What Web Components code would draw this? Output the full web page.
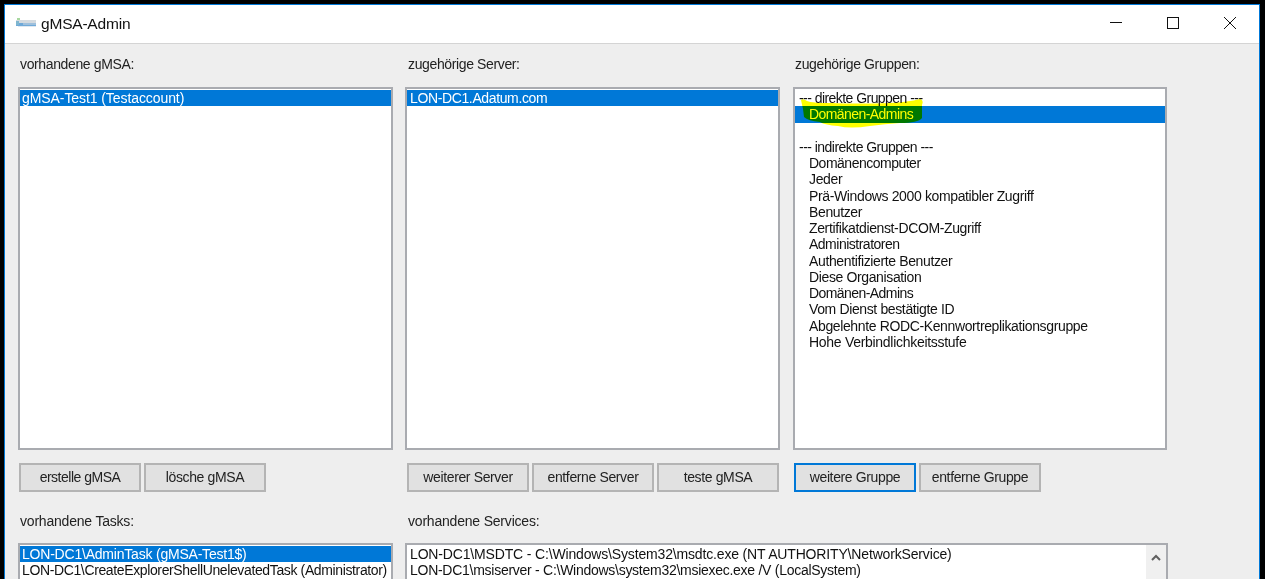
<!DOCTYPE html>
<html>
<head>
<meta charset="utf-8">
<title>gMSA-Admin</title>
<style>
    html, body { margin: 0; height: 100%; overflow: hidden; background: #000; }
    body { font-family: "Liberation Sans", Arial, sans-serif; }
</style>
</head>
<body>
<gmsa-window>
    <title-bar slot="title">gMSA-Admin</title-bar>

    <list-column label="vorhandene gMSA:">
        <list-box>
            <list-row selected style="letter-spacing: -0.08px;">gMSA-Test1 (Testaccount)</list-row>
        </list-box>
        <win-button slot="buttons" style="letter-spacing: -0.5px;">erstelle gMSA</win-button>
        <win-button slot="buttons">lösche gMSA</win-button>
    </list-column>

    <list-column label="zugehörige Server:" style="--row-pad: 3px; --label-pad: 3px; --button-pad: 2px;">
        <list-box>
            <list-row selected>LON-DC1.Adatum.com</list-row>
        </list-box>
        <win-button slot="buttons">weiterer Server</win-button>
        <win-button slot="buttons">entferne Server</win-button>
        <win-button slot="buttons">teste gMSA</win-button>
    </list-column>

    <list-column label="zugehörige Gruppen:" style="--row-pad: 4px; --label-pad: 2px; margin-left: 1px;">
        <list-box>
            <list-row style="letter-spacing: -0.55px;">--- direkte Gruppen ---</list-row>
            <list-row selected indent style="letter-spacing: -0.57px;">Domänen-Admins</list-row>
            <list-row></list-row>
            <list-row style="letter-spacing: -0.53px;">--- indirekte Gruppen ---</list-row>
            <list-row indent style="letter-spacing: -0.5px;">Domänencomputer</list-row>
            <list-row indent>Jeder</list-row>
            <list-row indent>Prä-Windows 2000 kompatibler Zugriff</list-row>
            <list-row indent>Benutzer</list-row>
            <list-row indent>Zertifikatdienst-DCOM-Zugriff</list-row>
            <list-row indent style="letter-spacing: -0.5px;">Administratoren</list-row>
            <list-row indent>Authentifizierte Benutzer</list-row>
            <list-row indent>Diese Organisation</list-row>
            <list-row indent style="letter-spacing: -0.57px;">Domänen-Admins</list-row>
            <list-row indent>Vom Dienst bestätigte ID</list-row>
            <list-row indent>Abgelehnte RODC-Kennwortreplikationsgruppe</list-row>
            <list-row indent style="letter-spacing: -0.29px;">Hohe Verbindlichkeitsstufe</list-row>
            <marker-blob></marker-blob>
        </list-box>
        <win-button slot="buttons" focused>weitere Gruppe</win-button>
        <win-button slot="buttons">entferne Gruppe</win-button>
    </list-column>

    <list-column slot="lower" label="vorhandene Tasks:" short>
        <list-box>
            <list-row selected style="letter-spacing: -0.21px;">LON-DC1\AdminTask (gMSA-Test1$)</list-row>
            <list-row>LON-DC1\CreateExplorerShellUnelevatedTask (Administrator)</list-row>
        </list-box>
    </list-column>

    <list-column slot="lower" label="vorhandene Services:" short style="--row-pad: 3px; --label-pad: 3px;">
        <list-box scrollbar>
            <list-row style="letter-spacing: -0.16px;">LON-DC1\MSDTC - C:\Windows\System32\msdtc.exe (NT AUTHORITY\NetworkService)</list-row>
            <list-row style="letter-spacing: -0.27px;">LON-DC1\msiserver - C:\Windows\system32\msiexec.exe /V (LocalSystem)</list-row>
        </list-box>
    </list-column>
</gmsa-window>

<script>
class GmsaWindow extends HTMLElement {
    constructor() {
        super();
        this.attachShadow({ mode: 'open' });
        this.shadowRoot.innerHTML = `
            <style>
                :host {
                    display: flex;
                    flex-direction: column;
                    box-sizing: border-box;
                    width: 1256px;
                    height: 575px;
                    margin: 4px 0 0 4px;
                    border: 1px solid #0078d7;
                    border-bottom: 0;
                    background: #eeeeee;
                    overflow: hidden;
                }
                .panel {
                    display: flex;
                    flex-direction: column;
                    padding: 0 0 0 13px;
                }
                .top, .lower {
                    display: grid;
                    grid-template-columns: 375px 375px 375px;
                    column-gap: 12px;
                }
                .lower {
                    grid-template-columns: 375px 763px;
                    margin-top: 8px;
                }
            </style>
            <slot name="title"></slot>
            <div class="panel">
                <div class="top"><slot></slot></div>
                <div class="lower"><slot name="lower"></slot></div>
            </div>
        `;
    }
}

class TitleBar extends HTMLElement {
    constructor() {
        super();
        this.attachShadow({ mode: 'open' });
        this.shadowRoot.innerHTML = `
            <style>
                :host {
                    display: flex;
                    align-items: center;
                    height: 39px;
                    box-sizing: border-box;
                    background: #fff;
                    border-bottom: 1px solid #d4d4d4;
                    padding-left: 10px;
                    font-size: 15.5px;
                    letter-spacing: -0.2px;
                    color: #111;
                }
                .icon { width: 22px; height: 12px; margin-right: 4px; flex: none; }
                .text { flex: 1; }
                .controls { display: flex; margin: 0 1px 2px 0; }
                .controls span {
                    display: flex;
                    align-items: center;
                    justify-content: center;
                    width: 57px;
                    height: 36px;
                }
                svg { display: block; }
            </style>
            <svg class="icon" viewBox="0 0 22 12">
                <rect x="2" y="0" width="3" height="2" fill="#a8d8a0"/>
                <rect x="1" y="2" width="20" height="3" fill="#d4dadf"/>
                <rect x="1" y="5" width="20" height="3" fill="#6fa9d8"/>
                <path d="M1 3 H4 V7 H1 Z" fill="#7fb6cf"/>
                <rect x="8" y="5.5" width="13" height="1" fill="#cfd8e0"/>
                <rect x="3" y="8" width="18" height="1" fill="#dfe8f0"/>
            </svg>
            <div class="text"><slot></slot></div>
            <div class="controls">
                <span><svg width="12" height="12" viewBox="0 0 12 12"><path d="M0 5.5 H12" stroke="#111" fill="none"/></svg></span>
                <span><svg width="12" height="12" viewBox="0 0 12 12"><rect x=".5" y=".5" width="11" height="11" stroke="#111" fill="none"/></svg></span>
                <span><svg width="12" height="12" viewBox="0 0 12 12"><path d="M0 0 L12 12 M12 0 L0 12" stroke="#111" fill="none"/></svg></span>
            </div>
        `;
    }
}

class ListColumn extends HTMLElement {
    constructor() {
        super();
        this.attachShadow({ mode: 'open' });
        this.shadowRoot.innerHTML = `
            <style>
                :host {
                    display: flex;
                    flex-direction: column;
                    font-size: 14px;
                    letter-spacing: -0.37px;
                    color: #222;
                }
                .label {
                    height: 43px;
                    padding: 12px 0 0 var(--label-pad, 2px);
                    box-sizing: border-box;
                    line-height: 16px;
                }
                :host([short]) .label { padding-top: 13px; letter-spacing: -0.2px; }
                .list { display: flex; height: 363px; }
                :host([short]) .list { height: 60px; }
                .buttons {
                    display: flex;
                    gap: 3px;
                    padding: 13px 0 0 var(--button-pad, 1px);
                    height: 29px;
                }
                :host([short]) .buttons { display: none; }
            </style>
            <div class="label"></div>
            <div class="list"><slot></slot></div>
            <div class="buttons"><slot name="buttons"></slot></div>
        `;
    }

    connectedCallback() {
        this.shadowRoot.querySelector('.label').textContent = this.getAttribute('label');
    }
}

class ListBox extends HTMLElement {
    constructor() {
        super();
        this.attachShadow({ mode: 'open' });
        this.shadowRoot.innerHTML = `
            <style>
                :host {
                    display: flex;
                    position: relative;
                    flex: 1;
                    box-sizing: border-box;
                    border: 2px solid #a9abb0;
                    background: #fff;
                    overflow: hidden;
                }
                .rows { flex: 1; min-width: 0; padding-top: 1px; }
                .scroll {
                    display: none;
                    flex: none;
                    width: 20px;
                    background: #f0f0f0;
                    justify-content: center;
                    padding-top: 9px;
                }
                :host([scrollbar]) .scroll { display: flex; }
                svg { display: block; }
            </style>
            <div class="rows"><slot></slot></div>
            <div class="scroll">
                <svg width="10" height="7" viewBox="0 0 10 7"><path d="M1 6 L5 2 L9 6" stroke="#606060" stroke-width="2" fill="none"/></svg>
            </div>
        `;
    }
}

class ListRow extends HTMLElement {
    constructor() {
        super();
        this.attachShadow({ mode: 'open' });
        this.shadowRoot.innerHTML = `
            <style>
                :host {
                    display: block;
                    height: 16.25px;
                    line-height: 16px;
                    padding-left: var(--row-pad, 2px);
                    white-space: nowrap;
                    color: #111;
                }
                :host([indent]) { padding-left: 14px; }
                :host([selected]) { background: #0078d7; color: #fff; }
            </style>
            <slot></slot>
        `;
    }
}

// the highlighter stroke sits over the row, multiply turns blue into green
class MarkerBlob extends HTMLElement {
    constructor() {
        super();
        this.attachShadow({ mode: 'open' });
        this.shadowRoot.innerHTML = `
            <style>
                :host {
                    position: absolute;
                    left: 5px;
                    top: 10px;
                    width: 124px;
                    height: 32px;
                    mix-blend-mode: multiply;
                    pointer-events: none;
                }
                svg { display: block; }
            </style>
            <svg width="124" height="32" viewBox="0 0 124 32">
                <path d="M1 1 Q3 -1 7 2 Q12 4 30 4 Q60 5 90 4 Q108 3 120 0 Q124 1 122 6 L122 19 Q118 24 100 24 Q85 25 70 27 Q50 30 38 27 Q25 26 20 23 Q8 22 4 18 L3 10 Z" fill="#ffff00"/>
            </svg>
        `;
    }
}

class WinButton extends HTMLElement {
    constructor() {
        super();
        this.attachShadow({ mode: 'open' });
        this.shadowRoot.innerHTML = `
            <style>
                :host {
                    display: flex;
                    align-items: center;
                    justify-content: center;
                    box-sizing: border-box;
                    width: 122px;
                    height: 29px;
                    padding-bottom: 1px;
                    background: #e1e1e1;
                    border: 2px solid #b4b4b4;
                    color: #222;
                }
                :host([focused]) { border-color: #0078d7; }
            </style>
            <slot></slot>
        `;
    }
}

customElements.define('gmsa-window', GmsaWindow);
customElements.define('title-bar', TitleBar);
customElements.define('list-column', ListColumn);
customElements.define('list-box', ListBox);
customElements.define('list-row', ListRow);
customElements.define('marker-blob', MarkerBlob);
customElements.define('win-button', WinButton);
</script>
</body>
</html>
